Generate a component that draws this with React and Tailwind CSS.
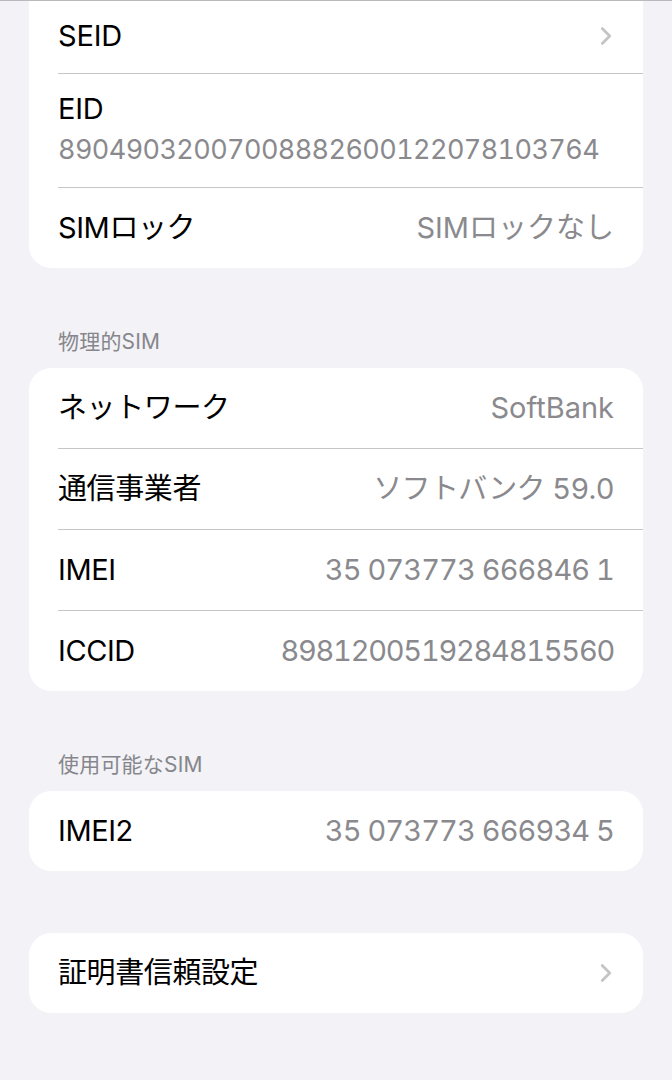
import { ChevronRight } from 'lucide-react';

const font = { fontFamily: '"Inter", "Noto Sans CJK JP", sans-serif' };

const Divider = () => <div className="ml-[29px] h-px bg-[#c6c6c8]" />;

const Row = ({ label, value, chevron, valueClass = 'tracking-[0px]' }) => (
  <div className="flex h-[80px] items-center justify-between pl-[29px] pr-[29px]">
    <span className="text-[29px] tracking-[-0.4px] text-black">{label}</span>
    {value && <span className={`text-[29px] text-[#8a8a8e] tabular-nums ${valueClass}`}>{value}</span>}
    {chevron && <ChevronRight size={30} strokeWidth={2.2} className="mr-[-7px] text-[#c4c4c7]" />}
  </div>
);

const SectionHeader = ({ title }) => (
  <div className="flex h-[100px] items-end pb-[11px] pl-[29px]">
    <span className="text-[21px] tracking-[0.2px] text-[#86868b]">{title}</span>
  </div>
);

const App = () => {
  return (
    <div style={font} className="min-h-[1080px] border-t border-[#b9b9bd] bg-[#f2f2f7] px-[29px]">
      {/* Card cut off at the top */}
      <div className="rounded-b-[22px] bg-white">
        <div className="flex h-[72px] items-center justify-between pb-[3px] pl-[29px] pr-[29px]">
          <span className="text-[29px] tracking-[-0.2px] text-black">SEID</span>
          <ChevronRight size={30} strokeWidth={2.2} className="mr-[-7px] text-[#c4c4c7]" />
        </div>
        <Divider />
        <div className="flex h-[113px] flex-col justify-center pb-[2px] pl-[29px] pr-[29px]">
          <span className="text-[29px] leading-[38px] tracking-[-0.2px] text-black">EID</span>
          <span className="mt-[3px] text-[27px] leading-[38px] tracking-[-0.6px] text-[#8a8a8e] tabular-nums">
            89049032007008882600122078103764
          </span>
        </div>
        <Divider />
        <Row label="SIMロック" value="SIMロックなし" />
      </div>

      <SectionHeader title="物理的SIM" />
      <div className="rounded-[22px] bg-white">
        <Row label="ネットワーク" value="SoftBank" />
        <Divider />
        <Row label="通信事業者" value="ソフトバンク 59.0" valueClass="tracking-[-0.6px]" />
        <Divider />
        <Row label="IMEI" value="35 073773 666846 1" valueClass="tracking-[-0.9px]" />
        <Divider />
        <Row label="ICCID" value="8981200519284815560" valueClass="tracking-[-1.25px]" />
      </div>

      <SectionHeader title="使用可能なSIM" />
      <div className="rounded-[22px] bg-white">
        <Row label="IMEI2" value="35 073773 666934 5" valueClass="tracking-[-0.9px]" />
      </div>

      <div className="mt-[62px] rounded-[22px] bg-white">
        <Row label="証明書信頼設定" chevron />
      </div>
    </div>
  );
};

export default App;
